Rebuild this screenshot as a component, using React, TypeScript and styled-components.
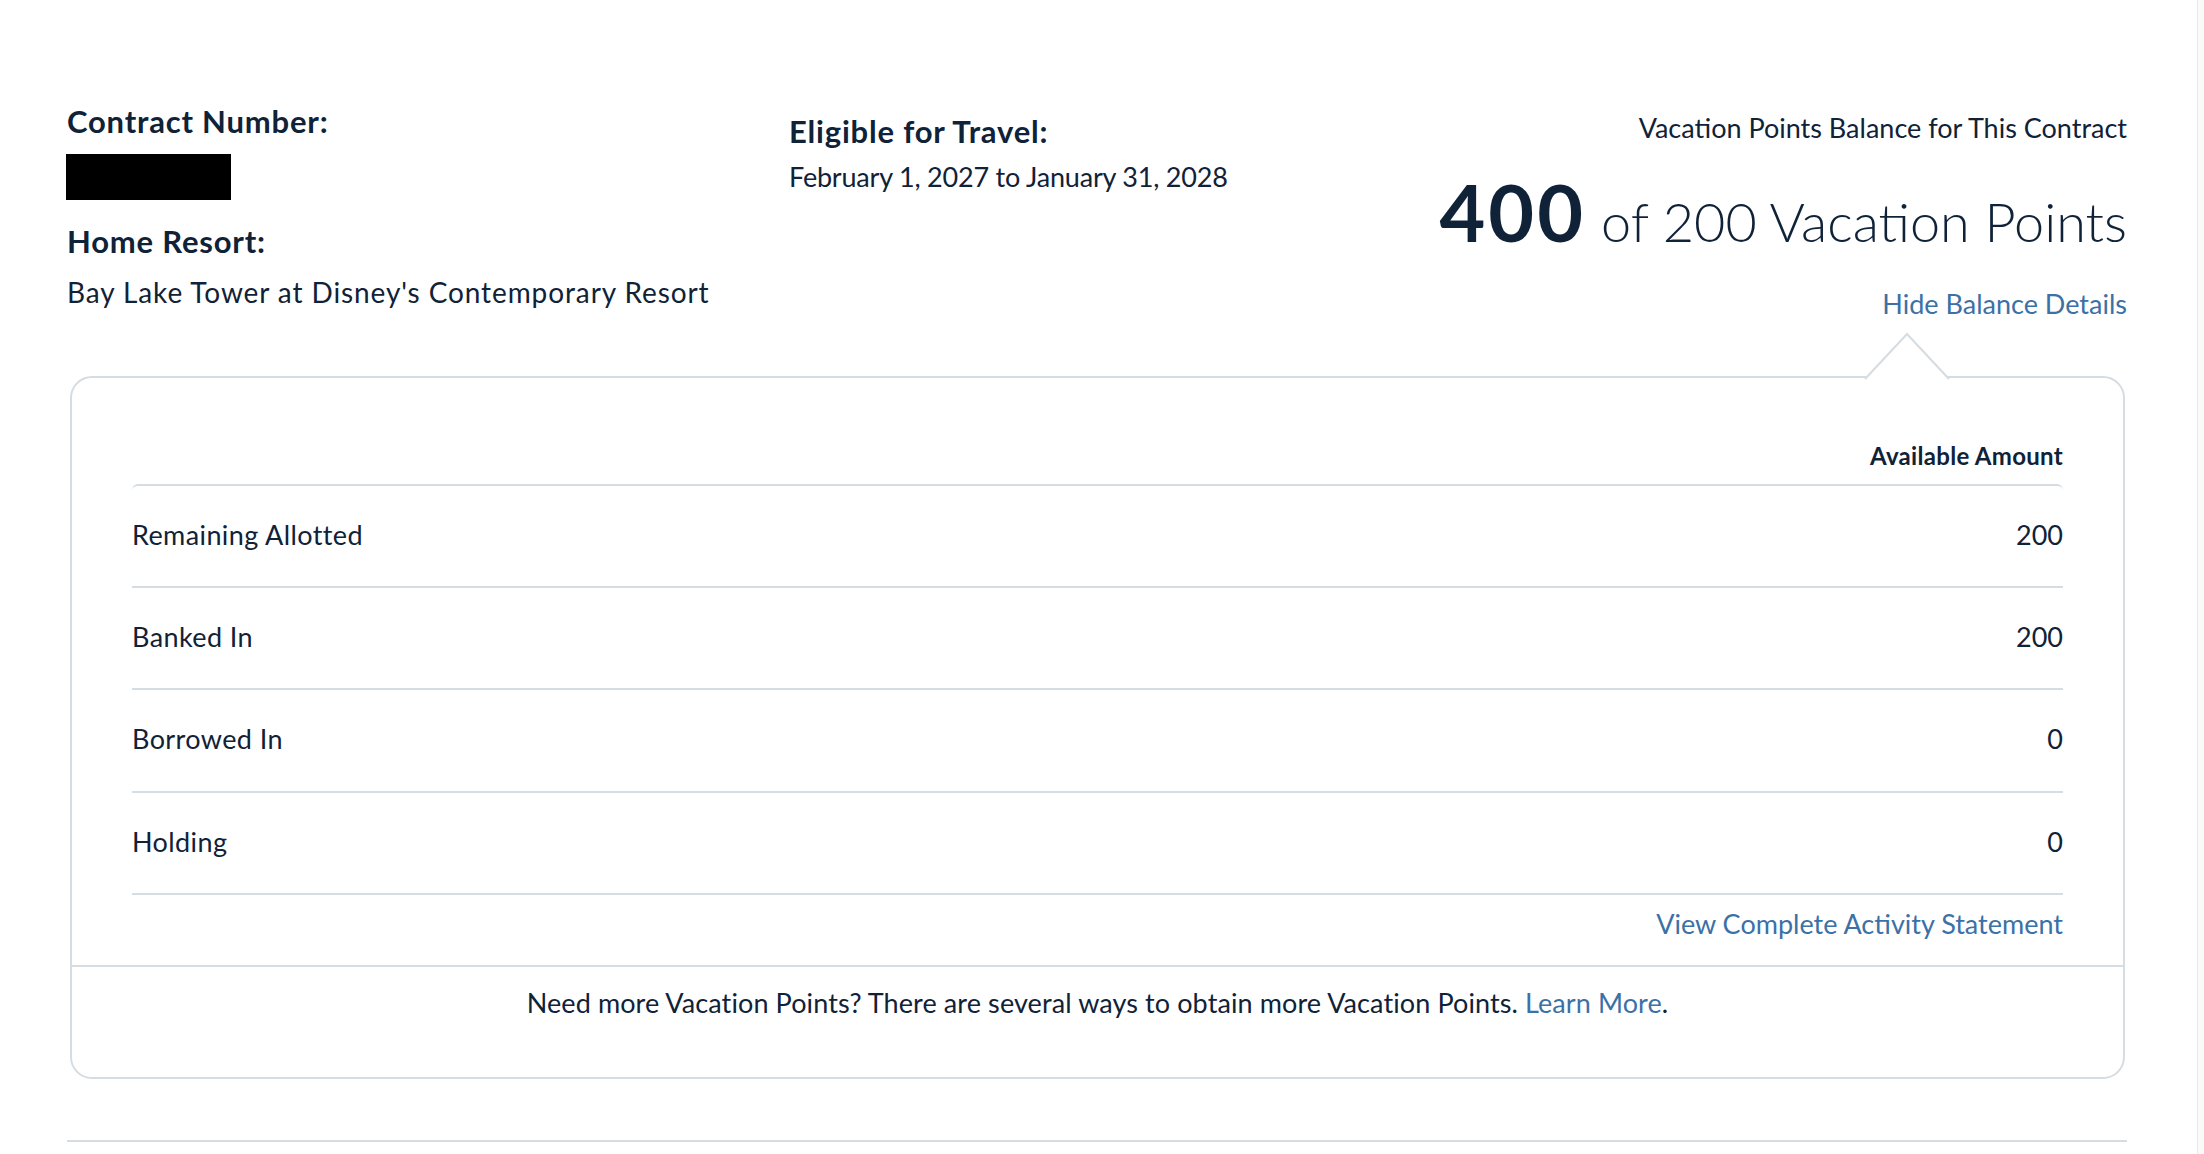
import React from "react";
import styled, { createGlobalStyle } from "styled-components";

const INK = "#0f2238";
const LINK = "#3b71a6";
const RULE = "#d5dce2";

const BALANCE_ROWS = [
  { label: "Remaining Allotted", amount: 200 },
  { label: "Banked In", amount: 200 },
  { label: "Borrowed In", amount: 0 },
  { label: "Holding", amount: 0 },
];

const GlobalStyle = createGlobalStyle`
  html, body {
    margin: 0;
    padding: 0;
    background: #fff;
  }
  body {
    font-family: Lato, "Open Sans", sans-serif;
    color: ${INK};
    -webkit-font-smoothing: antialiased;
  }
  * {
    box-sizing: border-box;
  }
`;

const Page = styled.div`
  display: flex;
  min-height: 100vh;
`;

const Main = styled.main`
  flex: 1;
  padding: 0 70px 0 67px;
`;

const ScrollRail = styled.div`
  width: 7px;
  flex-shrink: 0;
  background: #fafafa;
  border-left: 1px solid #e6e8ea;
`;

const Header = styled.section`
  display: grid;
  grid-template-columns: 722px 1fr auto;
  padding-top: 103px;
`;

const Column = styled.div<{ offset?: number; alignRight?: boolean }>`
  display: flex;
  flex-direction: column;
  align-items: ${({ alignRight }) => (alignRight ? "flex-end" : "flex-start")};
  padding-top: ${({ offset }) => offset ?? 0}px;
`;

const Label = styled.h3<{ gap?: number }>`
  margin: ${({ gap }) => gap ?? 0}px 0 0;
  font-size: 31px;
  line-height: 1.2;
  font-weight: 700;
  letter-spacing: 0.8px;
`;

const Value = styled.p<{ gap?: number; size?: number; spacing?: number }>`
  margin: ${({ gap }) => gap ?? 0}px 0 0;
  font-size: ${({ size }) => size ?? 27}px;
  letter-spacing: ${({ spacing }) => spacing ?? 0}px;
  line-height: 1.2;
  font-weight: 400;
`;

const Redacted = styled.div`
  width: 165px;
  height: 46px;
  margin-top: 14px;
  margin-left: -1px;
  background: #000;
`;

const Caption = styled.p`
  margin: 0;
  font-size: 27px;
  line-height: 1.2;
`;

const Total = styled.p`
  display: flex;
  align-items: baseline;
  margin: 28px 0 0;
  line-height: 1;
  white-space: nowrap;
`;

const TotalUsed = styled.strong`
  font-size: 79px;
  font-weight: 700;
  letter-spacing: 3px;
  margin-right: 15px;
`;

const TotalOf = styled.span`
  font-size: 54px;
  font-weight: 300;
`;

const TextLink = styled.a`
  color: ${LINK};
  text-decoration: none;
  cursor: pointer;
`;

const ToggleLink = styled(TextLink)`
  margin-top: 37px;
  font-size: 27px;
  line-height: 1.2;
`;

const Card = styled.section`
  position: relative;
  margin: 55px 2px 0 3px;
  border: 2px solid ${RULE};
  border-radius: 22px;
`;

const Pointer = styled.svg`
  position: absolute;
  top: -47px;
  right: 173px;
  display: block;
`;

const CardBody = styled.div`
  padding: 64px 60px 24px;
  display: flex;
  flex-direction: column;
`;

const ColumnHead = styled.div`
  align-self: flex-end;
  font-size: 24px;
  line-height: 1.2;
  font-weight: 700;
  letter-spacing: 0.3px;
  margin-bottom: 13px;
`;

const Rows = styled.div`
  border-top: 2px solid ${RULE};
  border-radius: 6px 6px 0 0;
`;

const Row = styled.div`
  display: flex;
  justify-content: space-between;
  padding: 33px 0 35px;
  border-bottom: 2px solid ${RULE};
  font-size: 27px;
  line-height: 1.2;
`;

const RowLabel = styled.span`
  letter-spacing: 0.4px;
`;

const StatementLink = styled(TextLink)`
  align-self: flex-end;
  margin-top: 13px;
  font-size: 27px;
  line-height: 1.2;
`;

const CardFooter = styled.div`
  border-top: 2px solid ${RULE};
  padding: 20px 0 58px;
  text-align: center;
  font-size: 27px;
  line-height: 1.2;
  letter-spacing: 0.1px;
`;

const Divider = styled.hr`
  margin: 61px 0 0;
  border: 0;
  border-top: 2px solid ${RULE};
`;

function BalancePointer() {
  return (
    <Pointer width="86" height="49" viewBox="0 0 86 49">
      <polygon points="1,49 43,3 85,49" fill="#fff" />
      <polyline
        points="1,48 43,3 85,48"
        fill="none"
        stroke={RULE}
        strokeWidth="2"
      />
    </Pointer>
  );
}

export default function App() {
  return (
    <>
      <GlobalStyle />
      <Page>
        <Main>
          <Header>
            <Column>
              <Label>Contract Number:</Label>
              <Redacted />
              <Label gap={23}>Home Resort:</Label>
              <Value gap={16} size={28} spacing={0.9}>
                Bay Lake Tower at Disney's Contemporary Resort
              </Value>
            </Column>
            <Column offset={10}>
              <Label>Eligible for Travel:</Label>
              <Value gap={11} spacing={-0.2}>
                February 1, 2027 to January 31, 2028
              </Value>
            </Column>
            <Column offset={9} alignRight>
              <Caption>Vacation Points Balance for This Contract</Caption>
              <Total>
                <TotalUsed>400</TotalUsed>
                <TotalOf>of 200 Vacation Points</TotalOf>
              </Total>
              <ToggleLink>Hide Balance Details</ToggleLink>
            </Column>
          </Header>

          <Card>
            <BalancePointer />
            <CardBody>
              <ColumnHead>Available Amount</ColumnHead>
              <Rows>
                {BALANCE_ROWS.map((row) => (
                  <Row key={row.label}>
                    <RowLabel>{row.label}</RowLabel>
                    <span>{row.amount}</span>
                  </Row>
                ))}
              </Rows>
              <StatementLink>View Complete Activity Statement</StatementLink>
            </CardBody>
            <CardFooter>
              Need more Vacation Points? There are several ways to obtain more
              Vacation Points. <TextLink>Learn More</TextLink>.
            </CardFooter>
          </Card>

          <Divider />
        </Main>
        <ScrollRail />
      </Page>
    </>
  );
}
